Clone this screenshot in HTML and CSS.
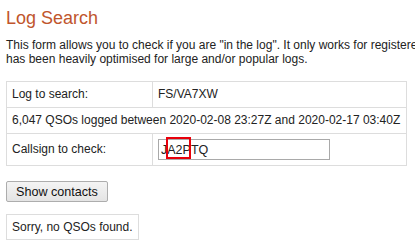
FILE: index.html
```html
<!DOCTYPE html>
<html lang="en">
<head>
<meta charset="utf-8">
<title>Log Search</title>
<link rel="stylesheet" href="styles.css">
</head>
<body>
<div class="page">
  <h1 class="title">Log Search</h1>
  <p class="intro">This form allows you to check if you are "in the log". It only works for registered logs, and<br>has been heavily optimised for large and/or popular logs.</p>
  <table class="search-table">
    <tr>
      <td class="label">Log to search:</td>
      <td>FS/VA7XW</td>
    </tr>
    <tr>
      <td colspan="2">6,047 QSOs logged between 2020-02-08 23:27Z and 2020-02-17 03:40Z</td>
    </tr>
    <tr>
      <td class="label">Callsign to check:</td>
      <td class="input-cell">
        <span class="input-wrap">
          <input class="call-input" type="text" value="JA2PTQ">
          <span class="highlight"></span>
        </span>
      </td>
    </tr>
  </table>
  <button class="show-btn" type="button">Show contacts</button>
  <div class="message">Sorry, no QSOs found.</div>
</div>
</body>
</html>
```

FILE: styles.css
```css
html, body {
  margin: 0;
  padding: 0;
  overflow: hidden;
  background: #ffffff;
}
.page {
  padding: 6px 6px 0 6px;
  font-family: "Liberation Sans", Arial, sans-serif;
  font-size: 12px;
  color: #222222;
}
.title {
  margin: 2px 0 0 0;
  font-size: 18px;
  line-height: 21px;
  font-weight: normal;
  color: #c0552c;
}
.intro {
  margin: 9px 0 0 0;
  line-height: 14px;
  white-space: nowrap;
}
.search-table {
  margin-top: 15px;
  border-collapse: collapse;
  width: 401px;
}
.search-table td {
  border: 1px solid #dddddd;
  padding: 5px 5px;
  line-height: 15px;
  vertical-align: middle;
}
.search-table td.label {
  width: 135px;
}
.search-table td.input-cell {
  padding-top: 5px;
  padding-bottom: 5px;
}
.input-wrap {
  position: relative;
  display: inline-block;
  vertical-align: middle;
}
.call-input {
  display: block;
  box-sizing: border-box;
  width: 172px;
  height: 21px;
  margin: 0;
  padding: 0 2px;
  border: 1px solid #a9a9a9;
  font-family: "Liberation Sans", Arial, sans-serif;
  font-size: 12.5px;
  color: #222222;
  background: #ffffff;
}
.highlight {
  position: absolute;
  left: 8px;
  top: -2px;
  width: 25px;
  height: 22px;
  box-sizing: border-box;
  border: 2px solid #e8000b;
}
.show-btn {
  display: block;
  margin-top: 15px;
  height: 21px;
  padding: 0 9px;
  border: 1px solid #adadad;
  border-radius: 2px;
  background: linear-gradient(#f4f4f4, #e4e4e4);
  font-family: "Liberation Sans", Arial, sans-serif;
  font-size: 12.6px;
  color: #111111;
}
.message {
  display: inline-block;
  margin-top: 12px;
  padding: 5px 5px;
  line-height: 14px;
  border: 1px solid #dddddd;
}
```
